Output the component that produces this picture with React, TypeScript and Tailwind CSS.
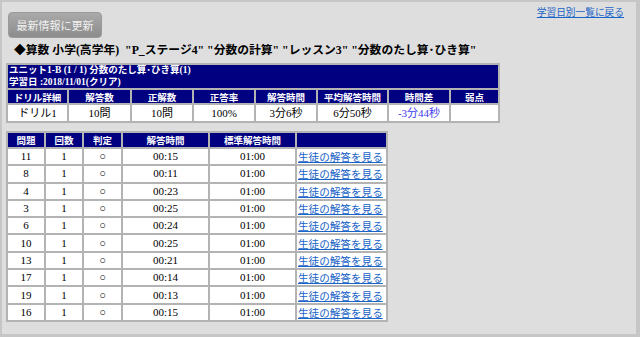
import React from "react";

const serif = { fontFamily: '"Liberation Serif", "Noto Sans CJK JP", serif' };

const rows = [
  ["11", "00:15"],
  ["8", "00:11"],
  ["4", "00:23"],
  ["3", "00:25"],
  ["6", "00:24"],
  ["10", "00:25"],
  ["13", "00:21"],
  ["17", "00:14"],
  ["19", "00:13"],
  ["16", "00:15"],
];

export default function App() {
  const th =
    "bg-[#000080] text-white font-bold text-[9.5px] leading-[12px] h-[13px] text-center p-0 font-['Noto_Sans_CJK_JP',sans-serif]";
  const td = "bg-white text-black text-[11px] text-center p-0 h-[16px] leading-[14px]";
  const td2 = "bg-white text-black text-[11px] text-center p-0 h-[15.3px] leading-[13px] align-middle";
  return (
    <div className="w-[640px] h-[337px] bg-[#c6c6c6] pt-[2px] pl-[2px] pr-[4px] pb-[3px]" style={serif}>
      <div className="w-full h-full bg-[#dedede] pl-[4px] pt-[2px] overflow-hidden">
        <div className="flex items-start justify-between">
          <button className="mt-[8px] ml-[2px] w-[94px] h-[26px] rounded-[4px] border border-[#9a9a9a] bg-gradient-to-b from-[#aaaaaa] to-[#8c8c8c] text-[#f0f0f0] text-[11px] leading-[24px] font-['Noto_Sans_CJK_JP',sans-serif]">
            最新情報に更新
          </button>
          <a className="mt-[2px] mr-[12px] text-[9.7px] leading-[13px] text-[#1a64c8] underline font-['Noto_Sans_CJK_JP',sans-serif]">
            学習日別一覧に戻る
          </a>
        </div>
        <div className="mt-[4px] ml-[8px] text-[11.8px] leading-[16px] font-bold text-black whitespace-nowrap">
          ◆算数 小学(高学年) &nbsp;"P_ステージ4" "分数の計算" "レッスン3" "分数のたし算･ひき算"
        </div>
        <table className="mt-[5px] table-fixed border-separate border-spacing-[2px] bg-[#b3b3b3] w-[494px]">
          <colgroup>
            <col className="w-[59px]" />
            <col className="w-[61px]" />
            <col className="w-[60px]" />
            <col className="w-[60px]" />
            <col className="w-[60px]" />
            <col className="w-[69px]" />
            <col className="w-[60px]" />
            <col className="w-[47px]" />
          </colgroup>
          <tbody>
            <tr>
              <td colSpan={8} className="bg-[#000080] text-white font-bold text-[9.5px] leading-[11.5px] h-[23px] px-[1px] py-0 text-left font-['Noto_Sans_CJK_JP',sans-serif]">
                <div style={serif}>ユニット1-B (1 / 1) 分数のたし算･ひき算(1)</div>
                <div style={serif}>学習日 :2018/11/01(クリア)</div>
              </td>
            </tr>
            <tr>
              <th className={th}>ドリル詳細</th>
              <th className={th}>解答数</th>
              <th className={th}>正解数</th>
              <th className={th}>正答率</th>
              <th className={th}>解答時間</th>
              <th className={th}>平均解答時間</th>
              <th className={th}>時間差</th>
              <th className={th}>弱点</th>
            </tr>
            <tr>
              <td className={td}>ドリル1</td>
              <td className={td}>10問</td>
              <td className={td}>10問</td>
              <td className={td}>100%</td>
              <td className={td}>3分6秒</td>
              <td className={td}>6分50秒</td>
              <td className={td + " !text-[#3a3af0]"}>-3分44秒</td>
              <td className={td}></td>
            </tr>
          </tbody>
        </table>
        <table className="mt-[8px] table-fixed border-separate border-spacing-[2px] bg-[#b3b3b3] w-[382px]">
          <colgroup>
            <col className="w-[36px]" />
            <col className="w-[36px]" />
            <col className="w-[37px]" />
            <col className="w-[85px]" />
            <col className="w-[85px]" />
            <col className="w-[89px]" />
          </colgroup>
          <tbody>
            <tr>
              <th className={th + " h-[14px]"}>問題</th>
              <th className={th + " h-[14px]"}>回数</th>
              <th className={th + " h-[14px]"}>判定</th>
              <th className={th + " h-[14px]"}>解答時間</th>
              <th className={th + " h-[14px]"}>標準解答時間</th>
              <th className={th + " h-[14px]"}></th>
            </tr>
            {rows.map(([q, t], i) => (
              <tr key={i}>
                <td className={td2}>{q}</td>
                <td className={td2}>1</td>
                <td className={td2 + " text-[9px]"}>○</td>
                <td className={td2}>{t}</td>
                <td className={td2}>01:00</td>
                <td className={td2 + " !text-left pl-[1px]"}>
                  <a className="block text-[10.6px] leading-[13px] text-[#1a64c8] underline font-['Noto_Sans_CJK_JP',sans-serif] whitespace-nowrap">
                    生徒の解答を見る
                  </a>
                </td>
              </tr>
            ))}
          </tbody>
        </table>
      </div>
    </div>
  );
}
